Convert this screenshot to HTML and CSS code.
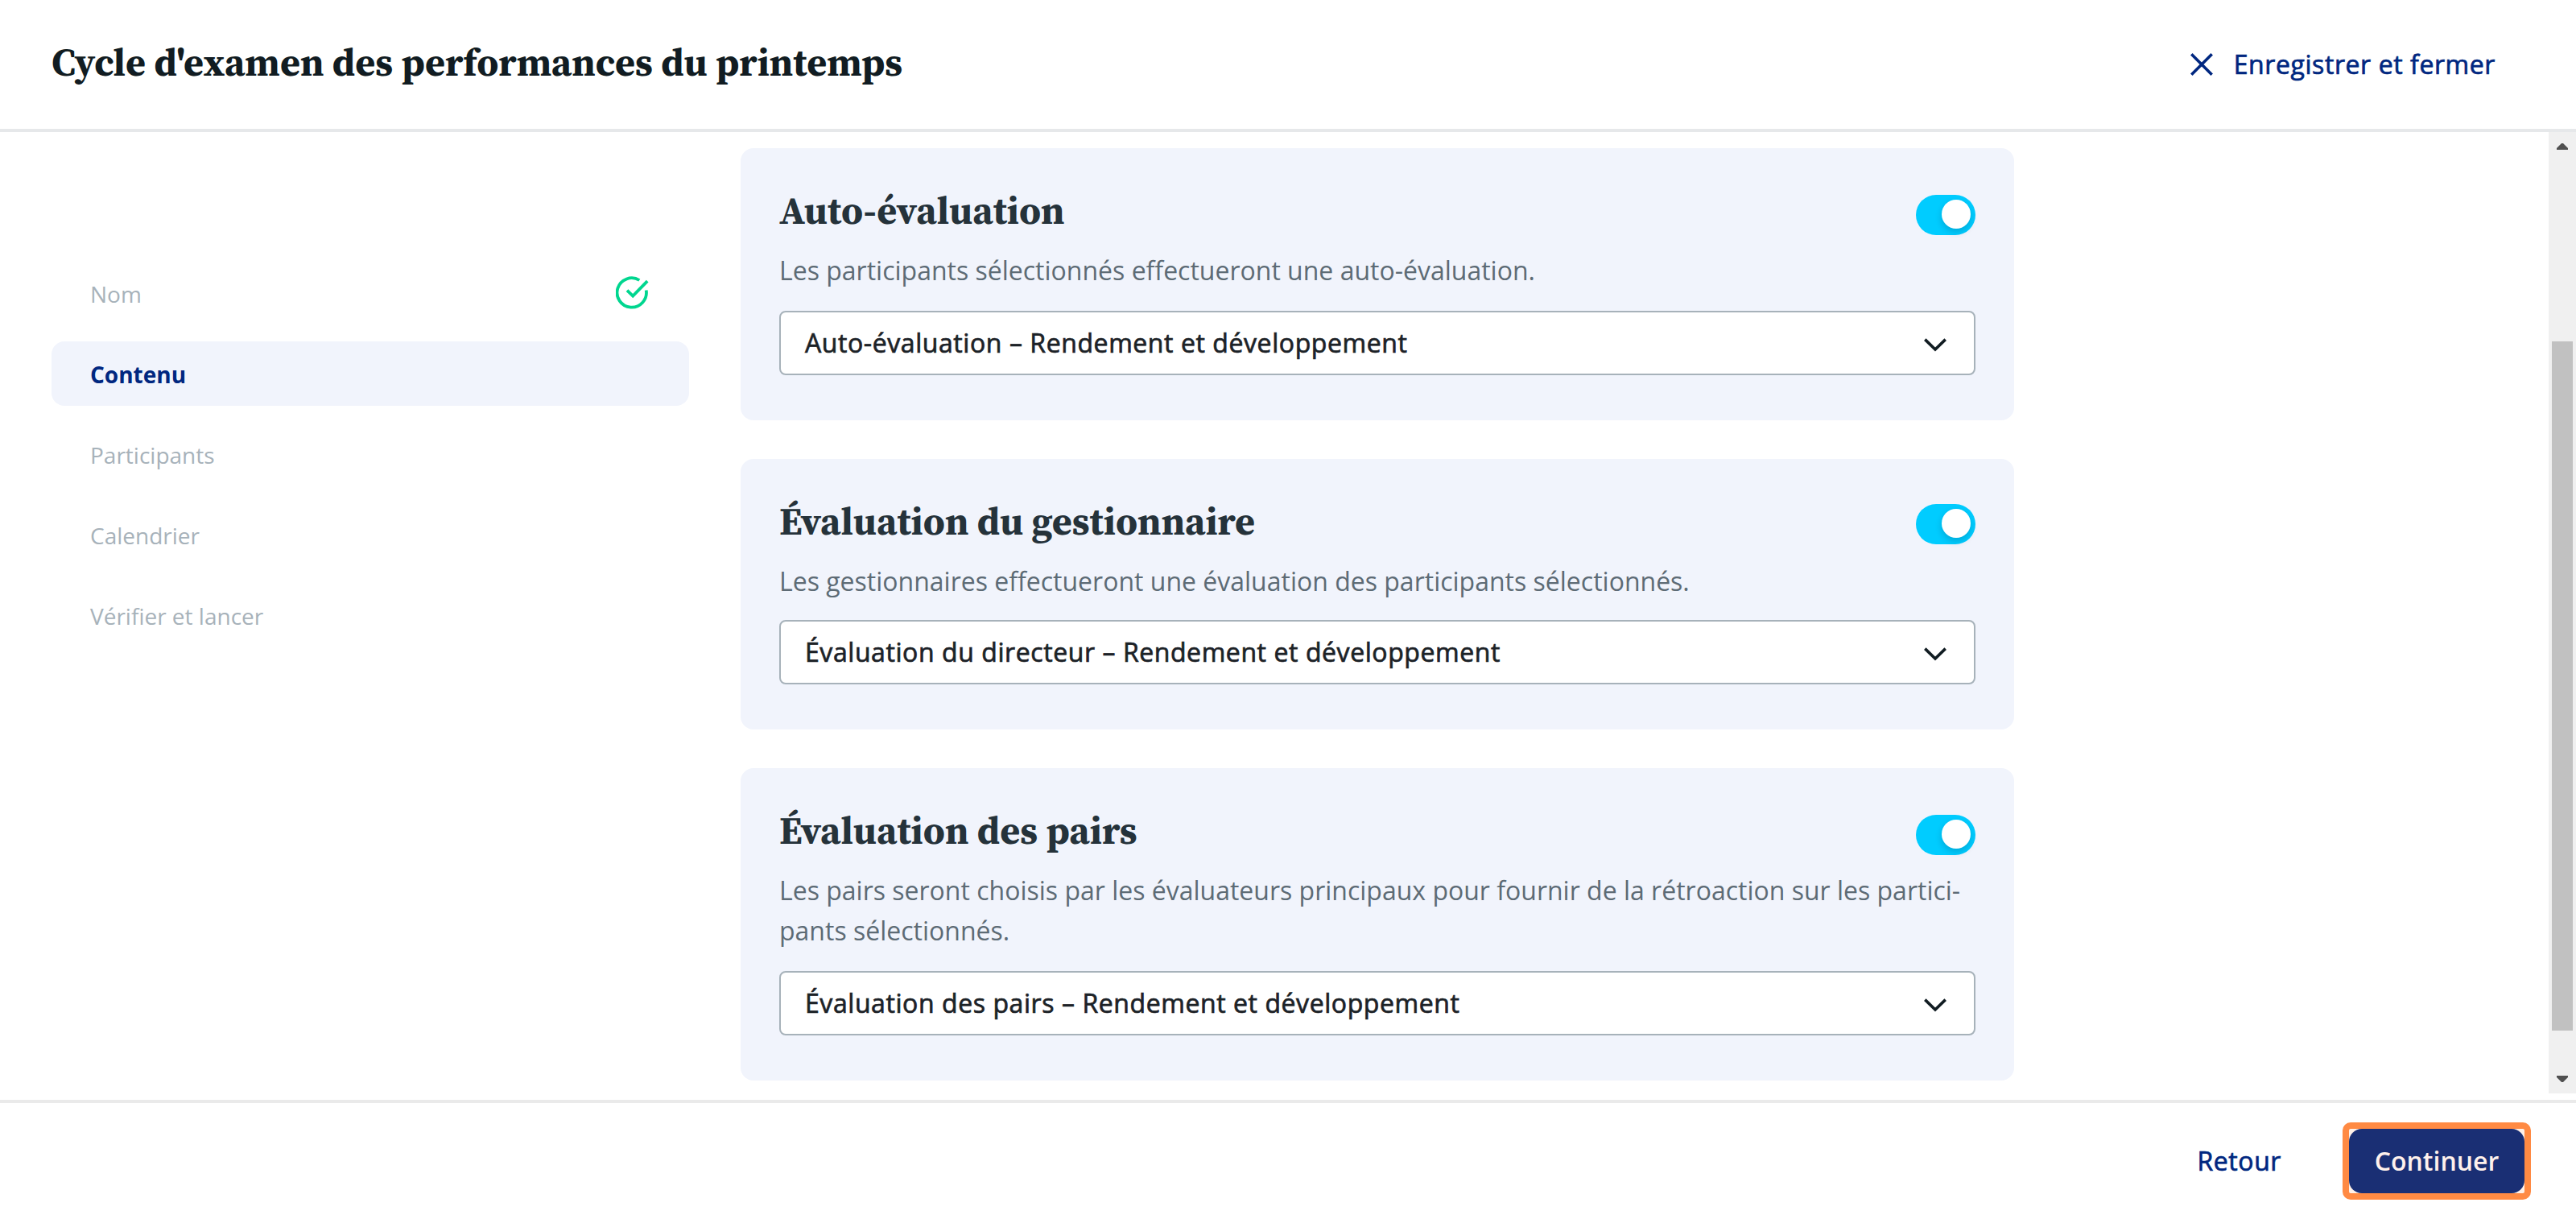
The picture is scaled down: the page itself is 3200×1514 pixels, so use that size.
FILE: index.html
```html
<!DOCTYPE html>
<html lang="fr">
<head>
<meta charset="utf-8">
<title>Cycle d'examen des performances du printemps</title>
<link rel="stylesheet" href="styles.css">
</head>
<body>
<header class="header">
  <h1 class="title">Cycle d'examen des performances du printemps</h1>
  <button class="close"><svg class="close-icon" viewBox="0 0 28 28"><path d="M1.300 1.300 26.700 26.700M26.700 1.300 1.300 26.700"/></svg><span class="label medium">Enregistrer et fermer</span></button>
</header>
<div class="body">
  <nav class="steps">
    <a class="step"><span class="step-name">Nom</span><svg class="check" viewBox="0 0 42 42"><path d="M29.300 5A18.200 18.200 0 1 0 37.700 17.500"/><path d="M14 17.600 21.200 24.600 39.200 6.200"/></svg></a>
    <a class="step active"><span class="step-name">Contenu</span></a>
    <a class="step"><span class="step-name">Participants</span></a>
    <a class="step"><span class="step-name">Calendrier</span></a>
    <a class="step"><span class="step-name">Vérifier et lancer</span></a>
  </nav>
  <main class="cards">
    <section class="card">
      <div class="card-head"><h2 class="card-title">Auto-évaluation</h2><span class="toggle"><span class="knob"></span></span></div>
      <p class="desc">Les participants sélectionnés effectueront une auto-évaluation.</p>
      <div class="select"><span class="label medium">Auto-évaluation – Rendement et développement</span><svg class="chevron" viewBox="0 0 28 17"><path d="M1.300 1.600 14 14 26.700 1.600"/></svg></div>
    </section>
    <section class="card compact">
      <div class="card-head"><h2 class="card-title">Évaluation du gestionnaire</h2><span class="toggle"><span class="knob"></span></span></div>
      <p class="desc">Les gestionnaires effectueront une évaluation des participants sélectionnés.</p>
      <div class="select"><span class="label medium">Évaluation du directeur – Rendement et développement</span><svg class="chevron" viewBox="0 0 28 17"><path d="M1.300 1.600 14 14 26.700 1.600"/></svg></div>
    </section>
    <section class="card">
      <div class="card-head"><h2 class="card-title">Évaluation des pairs</h2><span class="toggle"><span class="knob"></span></span></div>
      <p class="desc">Les pairs seront choisis par les évaluateurs principaux pour fournir de la rétroaction sur les partici-<br>pants sélectionnés.</p>
      <div class="select"><span class="label medium">Évaluation des pairs – Rendement et développement</span><svg class="chevron" viewBox="0 0 28 17"><path d="M1.300 1.600 14 14 26.700 1.600"/></svg></div>
    </section>
  </main>
  <div class="scrollbar">
    <svg class="arrow" viewBox="0 0 14 8"><path d="M0 8V6L6 0h2l6 6v2z"/></svg>
    <div class="thumb"></div>
    <svg class="arrow" viewBox="0 0 14 8"><path d="M0 0h14v2L8 8H6L0 2z"/></svg>
  </div>
</div>
<footer class="footer">
  <button class="back medium">Retour</button>
  <div class="highlight"><button class="next">Continuer</button></div>
</footer>
</body>
</html>
```
FILE: styles.css
```css
* { box-sizing: border-box; }
body {
  margin: 0;
  width: 3200px;
  height: 1514px;
  display: flex;
  flex-direction: column;
  overflow: hidden;
  background: #fff;
  font-family: "Open Sans", "Noto Sans", sans-serif;
  font-size: 32px;
}
button { border: 0; margin: 0; padding: 0; background: none; font: inherit; color: #002780; }
h1, h2, p { margin: 0; }
svg { display: block; fill: none; flex: none; }

/* Medium weight built from the regular face */
.medium { font-weight: 400; letter-spacing: .575px; -webkit-text-stroke: .7px currentColor; }
.label { padding-bottom: 2px; }

.header {
  height: 164px;
  flex: none;
  display: flex;
  align-items: center;
  justify-content: space-between;
  padding: 0 100px 0 64px;
  border-bottom: 4px solid #e6e8ea;
}
.title, .card-title {
  font-family: "Source Serif Pro", "Source Serif 4", "Noto Serif CJK SC", "Liberation Serif", serif;
  font-weight: 700;
  font-size: 48px;
  line-height: 60px;
  color: #111c22;
  white-space: nowrap;
}
.title { padding-bottom: 6px; }
.card-title { color: #25323a; line-height: 58px; }
.close { display: flex; align-items: center; gap: 26px; }
.close-icon { width: 28px; height: 28px; stroke: #002780; stroke-width: 3.6; }

.body { height: 1202px; flex: none; display: flex; }
.steps { width: 856px; margin: 160px 0 0 64px; flex: none; display: flex; flex-direction: column; gap: 20px; padding-right: 64px; }
.step {
  height: 80px;
  padding: 0 49px 0 48px;
  border-radius: 16px;
  display: flex;
  align-items: center;
  justify-content: space-between;
  font-size: 28px;
  color: #a7b2ba;
}
.step-name { padding-top: 2px; }
.step.active { background: #f1f4fc; color: #002780; font-weight: 700; }
.check { width: 42px; height: 42px; stroke: #00d68f; stroke-width: 3.8; }

.cards { width: 1582px; padding-top: 20px; display: flex; flex-direction: column; gap: 48px; }
.card { background: #f1f4fc; border-radius: 16px; padding: 48px 48px 56px; }
.card-head { display: flex; justify-content: space-between; align-items: flex-start; height: 79px; }
.toggle { width: 74px; height: 50px; margin-top: 10px; border-radius: 25px; background: #00ccff; display: flex; padding: 6px 6px 0 32px; }
.compact .toggle { margin-top: 8px; }
.knob { width: 36px; height: 36px; border-radius: 50%; background: #fff; box-shadow: 0 4px 8px rgba(0, 35, 60, .2); }
.desc { line-height: 50px; color: #5d6b75; white-space: nowrap; padding-bottom: 25px; }
.compact .desc { padding-bottom: 23px; }
.select {
  height: 80px;
  border: 2px solid #a7b2ba;
  border-radius: 8px;
  background: #fff;
  display: flex;
  align-items: center;
  justify-content: space-between;
  padding: 0 34px 0 30px;
  color: #1c2227;
}
.chevron { width: 28px; height: 17px; stroke: #111c22; stroke-width: 3.6; margin-top: 4px; }

.scrollbar { width: 34px; height: 1194px; margin-left: auto; background: #f0f0f0; display: flex; flex-direction: column; align-items: center; padding: 14px 0; }
.arrow { width: 14px; height: 8px; fill: #505050; }
.thumb { width: 26px; height: 856px; margin: 238px 0 auto; background: #c1c1c1; }

.footer { height: 148px; flex: none; border-top: 4px solid #eaeaea; display: flex; justify-content: flex-end; align-items: flex-start; padding: 24px 56px 0 0; }
.back { height: 96px; margin-right: 76px; padding-bottom: 2px; }
.highlight { border: 8px solid #ff8a43; border-radius: 10px; background: #fff1e8; height: 96px; }
.next { display: block; width: 218px; height: 80px; border-radius: 16px; background: #1a2f74; color: #fff1ec; font-weight: 600; padding-bottom: 2px; }
```
